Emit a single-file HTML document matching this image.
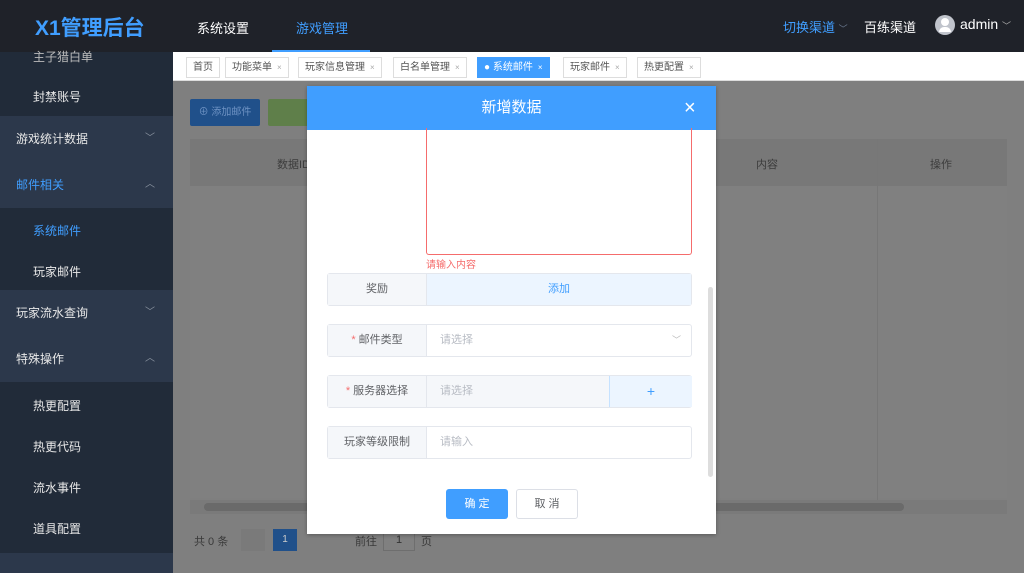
<!DOCTYPE html><html><head><meta charset="utf-8"><style>
*{box-sizing:border-box;margin:0;padding:0}
body{width:1024px;height:573px;overflow:hidden;position:relative;font-family:"Liberation Sans","Noto Sans CJK SC",sans-serif;background:#7f7f7f}
.a{position:absolute}
.top{left:0;top:0;width:1024px;height:52px;background:#1f2229}
.side{left:0;top:52px;width:173px;height:521px;background:#212b39}
.mi{position:absolute;left:0;width:173px;height:46px;background:#2c384b;color:#e8e8e8;font-size:12px;line-height:46px;padding-left:16px}
.si{position:absolute;left:33px;color:#e8e8e8;font-size:12px}
.chev{position:absolute;right:18px;color:#8a93a0;font-size:10px}
.tab{position:absolute;top:57px;height:21px;border:1px solid #ddd;background:#fff;font-size:10px;color:#555;line-height:19px;padding:0 6px}
.tab i{font-style:normal;color:#aaa;font-size:8px;margin-left:5px}
.row{position:absolute;left:327px;width:365px;height:33px;border:1px solid #e4e7ed;border-radius:3px;background:#fff;font-size:11px}
.lab{position:absolute;left:0;top:0;width:99px;height:31px;background:#f5f7fa;border-right:1px solid #e4e7ed;color:#606266;text-align:center;line-height:31px}
.ph{position:absolute;left:112px;top:0;line-height:31px;color:#b8bcc4}
.st{color:#f56c6c}
</style></head><body>
<div class="a top"></div>
<div class="a" style="left:35px;top:12px;color:#409eff;font-size:21px;font-weight:bold">X1管理后台</div>
<div class="a" style="left:197px;top:18px;color:#fff;font-size:13px">系统设置</div>
<div class="a" style="left:296px;top:18px;color:#409eff;font-size:13px">游戏管理</div>
<div class="a" style="left:272px;top:50px;width:98px;height:2px;background:#409eff"></div>
<div class="a" style="left:783px;top:17px;color:#409eff;font-size:13px">切换渠道 <span style="font-size:9px;color:#6a7a90">﹀</span></div>
<div class="a" style="left:864px;top:17px;color:#fff;font-size:13px">百练渠道</div>
<div class="a" style="left:935px;top:15px;width:20px;height:20px;border-radius:50%;background:#c0c4cc"></div>
<div class="a" style="left:941px;top:18px;width:8px;height:8px;border-radius:50%;background:#fff"></div>
<div class="a" style="left:939px;top:27px;width:12px;height:5px;border-radius:6px 6px 0 0;background:#fff"></div>
<div class="a" style="left:960px;top:16px;color:#fff;font-size:14px">admin <span style="font-size:9px;color:#aaa">﹀</span></div>
<div class="a side"></div>
<div class="si" style="top:48px;color:#bbb">主子猎白单</div>
<div class="si" style="top:88px">封禁账号</div>
<div class="mi" style="top:116px">游戏统计数据<span class="chev">﹀</span></div>
<div class="mi" style="top:162px;color:#409eff">邮件相关<span class="chev">︿</span></div>
<div class="si" style="top:222px;color:#409eff">系统邮件</div>
<div class="si" style="top:263px">玩家邮件</div>
<div class="mi" style="top:290px">玩家流水查询<span class="chev">﹀</span></div>
<div class="mi" style="top:336px">特殊操作<span class="chev">︿</span></div>
<div class="si" style="top:397px">热更配置</div>
<div class="si" style="top:438px">热更代码</div>
<div class="si" style="top:479px">流水事件</div>
<div class="si" style="top:520px">道具配置</div>
<div class="a" style="left:0;top:553px;width:173px;height:20px;background:#2c384b"></div>
<div class="a" style="left:173px;top:52px;width:851px;height:29px;background:#fff;border-bottom:1px solid #ddd"></div>
<div class="tab" style="left:186px">首页</div>
<div class="tab" style="left:225px">功能菜单<i>×</i></div>
<div class="tab" style="left:298px">玩家信息管理<i>×</i></div>
<div class="tab" style="left:393px">白名单管理<i>×</i></div>
<div class="tab" style="left:477px;background:#409eff;border-color:#409eff;color:#fff">● 系统邮件<i style="color:#fff">×</i></div>
<div class="tab" style="left:563px">玩家邮件<i>×</i></div>
<div class="tab" style="left:637px">热更配置<i>×</i></div>
<div class="a" style="left:190px;top:99px;width:70px;height:27px;background:#20508a;border-radius:2px;color:#6f93c4;font-size:10px;line-height:27px;text-align:center">⊕ 添加邮件</div>
<div class="a" style="left:268px;top:99px;width:50px;height:27px;background:#5f7f4a;border-radius:2px"></div>
<div class="a" style="left:190px;top:139px;width:817px;height:47px;background:#787878"></div>
<div class="a" style="left:190px;top:186px;width:817px;height:312px;background:#808080"></div>
<div class="a" style="left:277px;top:156px;color:#3c3c3c;font-size:11px">数据ID</div>
<div class="a" style="left:756px;top:156px;color:#3c3c3c;font-size:11px">内容</div>
<div class="a" style="left:930px;top:156px;color:#3c3c3c;font-size:11px">操作</div>
<div class="a" style="left:877px;top:139px;width:1px;height:375px;background:#777"></div>
<div class="a" style="left:190px;top:500px;width:817px;height:14px;background:#7a7a7a"></div>
<div class="a" style="left:204px;top:503px;width:700px;height:8px;background:#6a6a6a;border-radius:4px"></div>
<div class="a" style="left:194px;top:533px;color:#3a3a3a;font-size:11px">共 0 条</div>
<div class="a" style="left:241px;top:529px;width:24px;height:22px;background:#7a7a7a"></div>
<div class="a" style="left:273px;top:529px;width:24px;height:22px;background:#20508a;color:#ccc;font-size:10px;text-align:center;line-height:22px">1</div>
<div class="a" style="left:355px;top:533px;color:#3a3a3a;font-size:11px">前往</div>
<div class="a" style="left:383px;top:529px;width:32px;height:22px;background:#808080;border:1px solid #6e6e6e;color:#333;font-size:11px;text-align:center;line-height:20px">1</div>
<div class="a" style="left:421px;top:533px;color:#3a3a3a;font-size:11px">页</div>
<!-- dialog -->
<div class="a" style="left:307px;top:86px;width:409px;height:448px;background:#fff;box-shadow:0 1px 4px rgba(0,0,0,.3)"></div>
<div class="a" style="left:307px;top:86px;width:409px;height:44px;background:#409eff;color:#fff;font-size:15px;text-align:center;line-height:44px">新增数据</div>
<div class="a" style="left:684px;top:96px;color:#fff;font-size:20px;line-height:24px">×</div>
<div class="a" style="left:426px;top:128px;width:266px;height:127px;border:1px solid #f56c6c;border-top:none;border-radius:0 0 3px 3px"></div>
<div class="a" style="left:426px;top:256px;color:#f56c6c;font-size:10px">请输入内容</div>
<div class="row" style="top:273px"><div class="lab">奖励</div><div class="a" style="left:99px;top:0;width:264px;height:31px;background:#ecf5ff;color:#409eff;text-align:center;line-height:31px">添加</div></div>
<div class="row" style="top:324px"><div class="lab"><span class="st">* </span>邮件类型</div><div class="ph">请选择</div><div class="a" style="right:10px;top:0;line-height:31px;color:#bbb;font-size:9px">﹀</div></div>
<div class="row" style="top:375px"><div class="lab"><span class="st">* </span>服务器选择</div><div class="a" style="left:99px;top:0;width:182px;height:31px;background:#f5f7fa"></div><div class="ph">请选择</div><div class="a" style="left:281px;top:0;width:83px;height:31px;background:#ecf5ff;border-left:1px solid #c6e2ff;color:#409eff;text-align:center;line-height:31px;font-size:14px">+</div></div>
<div class="row" style="top:426px"><div class="lab">玩家等级限制</div><div class="ph">请输入</div></div>
<div class="a" style="left:708px;top:287px;width:5px;height:190px;background:#ddd;border-radius:3px"></div>
<div class="a" style="left:446px;top:489px;width:62px;height:30px;background:#409eff;border-radius:3px;color:#fff;font-size:11px;text-align:center;line-height:30px">确 定</div>
<div class="a" style="left:516px;top:489px;width:62px;height:30px;background:#fff;border:1px solid #dcdfe6;border-radius:3px;color:#606266;font-size:11px;text-align:center;line-height:28px">取 消</div>
</body></html>
